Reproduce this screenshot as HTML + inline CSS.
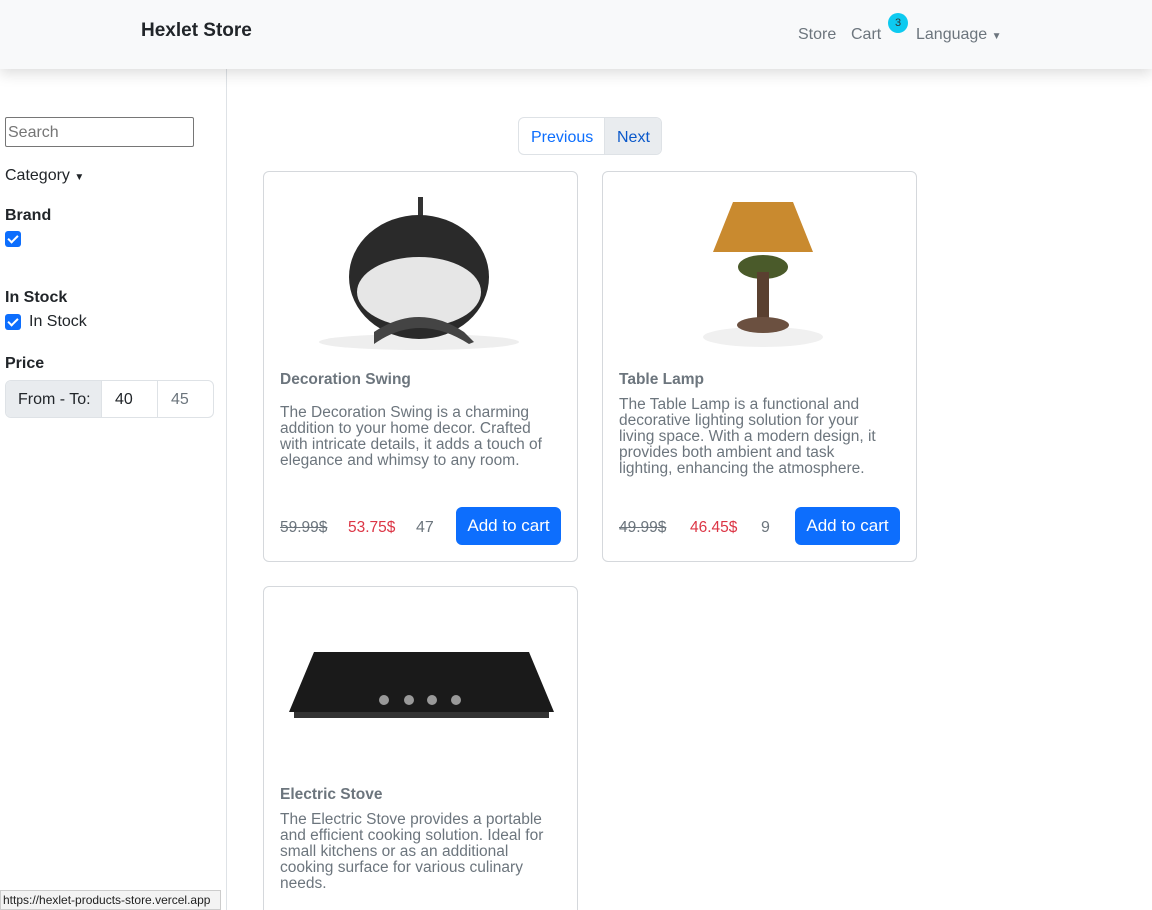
<!DOCTYPE html>
<html><head><meta charset="utf-8"><style>
*{box-sizing:border-box;margin:0;padding:0}
html,body{width:1152px;height:910px;overflow:hidden}
body{font-family:"Liberation Sans",sans-serif;font-size:16px;color:#212529;background:#fff;position:relative}
.nav{position:absolute;left:0;top:0;width:1152px;height:69px;background:#f8f9fa;box-shadow:0 4px 14px rgba(0,0,0,.15);z-index:2}
.brand{position:absolute;left:141px;top:20px;font-size:19px;font-weight:bold;color:#212529}
.nl{position:absolute;top:26px;color:#6c757d;font-size:16px}
.badge{position:absolute;left:888px;top:13px;width:20px;height:20px;border-radius:50%;background:#0dcaf0;font-size:11px;color:#333;text-align:center;line-height:20px}
.side{position:absolute;left:0;top:69px;width:227px;height:841px;border-right:1px solid #dee2e6}
.abs{position:absolute}
.cb{position:absolute;width:16px;height:16px;background:#0d6efd;border-radius:3px}
.cb:after{content:"";position:absolute;left:5px;top:2px;width:4px;height:8px;border:solid #fff;border-width:0 2px 2px 0;transform:rotate(45deg)}
.card{position:absolute;width:315px;border:1px solid #d5d8dc;border-radius:6px;background:#fff}
.t{position:absolute;left:16px;font-weight:bold;color:#6c757d;font-size:15.5px}
.d{position:absolute;left:16px;width:280px;color:#6c757d;font-size:15.5px;line-height:16px}
.old{position:absolute;left:16px;color:#6c757d;text-decoration:line-through;font-size:15.5px}
.new{position:absolute;left:84px;color:#dc3545;font-size:15.5px}
.q{position:absolute;color:#6c757d}
.btn{position:absolute;left:192px;width:105px;height:38px;background:#0d6efd;color:#fff;border-radius:6px;font-size:17px;text-align:center;line-height:38px}
</style></head><body>
<div class="nav">
<div class="brand">Hexlet Store</div>
<div class="nl" style="left:798px">Store</div>
<div class="nl" style="left:851px">Cart</div>
<div class="badge">3</div>
<div class="nl" style="left:916px">Language <span style="font-size:10px">▼</span></div>
</div>
<div class="side">
<div class="abs" style="left:5px;top:48px;width:189px;height:30px;border:1px solid #767676;border-radius:2px;color:#757575;padding:6px 0 0 2px;font-size:16px">Search</div>
<div class="abs" style="left:5px;top:98px">Category <span style="font-size:10px">▼</span></div>
<div class="abs" style="left:5px;top:138px;font-weight:bold">Brand</div>
<div class="cb" style="left:5px;top:162px"></div>
<div class="abs" style="left:5px;top:220px;font-weight:bold">In Stock</div>
<div class="cb" style="left:5px;top:245px"></div>
<div class="abs" style="left:29px;top:244px">In Stock</div>
<div class="abs" style="left:5px;top:286px;font-weight:bold">Price</div>
<div class="abs" style="left:5px;top:311px;width:209px;height:38px;border:1px solid #dee2e6;border-radius:6px;overflow:hidden">
<div class="abs" style="left:0;top:0;width:96px;height:36px;background:#e9ecef;border-right:1px solid #dee2e6;padding:10px 0 0 12px">From - To:</div>
<div class="abs" style="left:109px;top:10px">40</div>
<div class="abs" style="left:151px;top:0;width:1px;height:36px;background:#dee2e6"></div>
<div class="abs" style="left:165px;top:10px;color:#6c757d">45</div>
</div>
</div>
<div class="abs" style="left:518px;top:117px;width:144px;height:38px;border:1px solid #dee2e6;border-radius:6px;overflow:hidden">
<div class="abs" style="left:0;top:0;width:85px;height:36px;color:#0d6efd;padding:11px 0 0 12px">Previous</div>
<div class="abs" style="left:85px;top:0;width:58px;height:36px;background:#e9ecef;border-left:1px solid #dee2e6;color:#0a58ca;padding:11px 0 0 12px">Next</div>
</div>

<div class="card" style="left:263px;top:171px;height:391px">
<svg class="abs" style="left:50px;top:20px" width="210" height="165">
<ellipse cx="105" cy="150" rx="100" ry="8" fill="#eee"/>
<rect x="104" y="5" width="5" height="60" fill="#333"/>
<ellipse cx="105" cy="85" rx="70" ry="62" fill="#2a2a2a"/>
<ellipse cx="105" cy="100" rx="62" ry="35" fill="#e6e6e6"/>
<path d="M60 140 Q105 110 150 140 L160 150 L155 152 Q105 120 60 152Z" fill="#444"/>
</svg>
<div class="t" style="top:199px">Decoration Swing</div>
<div class="d" style="top:233px">The Decoration Swing is a charming addition to your home decor. Crafted with intricate details, it adds a touch of elegance and whimsy to any room.</div>
<div class="old" style="top:347px">59.99$</div>
<div class="new" style="top:347px">53.75$</div>
<div class="q" style="left:152px;top:347px">47</div>
<div class="btn" style="top:335px">Add to cart</div>
</div>

<div class="card" style="left:602px;top:171px;height:391px">
<svg class="abs" style="left:80px;top:15px" width="160" height="170">
<ellipse cx="80" cy="150" rx="60" ry="10" fill="#f0f0f0"/>
<path d="M50 15 L110 15 L130 65 L30 65Z" fill="#c98a2f"/>
<ellipse cx="80" cy="80" rx="25" ry="12" fill="#4a5a2a"/>
<rect x="74" y="85" width="12" height="50" fill="#5a4030"/>
<ellipse cx="80" cy="138" rx="26" ry="8" fill="#6b5040"/>
</svg>
<div class="t" style="top:199px">Table Lamp</div>
<div class="d" style="top:225px;width:270px">The Table Lamp is a functional and decorative lighting solution for your living space. With a modern design, it provides both ambient and task lighting, enhancing the atmosphere.</div>
<div class="old" style="top:347px">49.99$</div>
<div class="new" style="top:347px;left:87px">46.45$</div>
<div class="q" style="left:158px;top:347px">9</div>
<div class="btn" style="top:335px">Add to cart</div>
</div>

<div class="card" style="left:263px;top:586px;height:340px">
<svg class="abs" style="left:20px;top:50px" width="275" height="90">
<path d="M30 15 L245 15 L270 75 L5 75Z" fill="#1a1a1a"/>
<rect x="10" y="75" width="255" height="6" fill="#333"/>
<circle cx="100" cy="63" r="5" fill="#999"/><circle cx="125" cy="63" r="5" fill="#999"/><circle cx="148" cy="63" r="5" fill="#999"/><circle cx="172" cy="63" r="5" fill="#999"/>
</svg>
<div class="t" style="top:199px">Electric Stove</div>
<div class="d" style="top:225px">The Electric Stove provides a portable and efficient cooking solution. Ideal for small kitchens or as an additional cooking surface for various culinary needs.</div>
</div>

<div class="abs" style="left:0;top:890px;width:221px;height:20px;background:#f3f3f3;border:1px solid #ccc;font-size:12px;padding:2px 0 0 2px;color:#222">https://hexlet-products-store.vercel.app</div>
</body></html>
